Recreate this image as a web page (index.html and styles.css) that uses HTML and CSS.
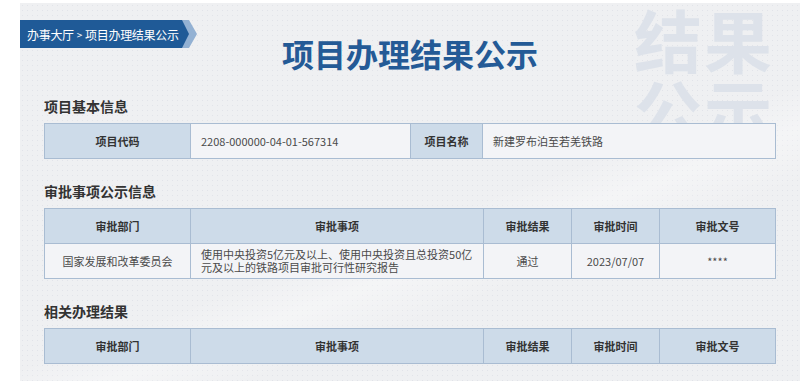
FILE: index.html
```html
<!DOCTYPE html>
<html lang="zh-CN">
<head>
<meta charset="utf-8">
<title>项目办理结果公示</title>
<link rel="stylesheet" href="styles.css">
</head>
<body>
<div class="page">
  <div class="watermark" aria-hidden="true">结果<br>公示</div>
  <header class="header">
    <div class="crumb-wrap">
      <div class="crumb">办事大厅<span class="sep">&gt;</span>项目办理结果公示</div>
    </div>
    <h1 class="title">项目办理结果公示</h1>
    <div></div>
  </header>

  <main class="content">
    <h2 class="sec-title">项目基本信息</h2>
    <table class="tbl tbl-basic">
      <colgroup><col class="c1"><col class="c2"><col class="c3"><col></colgroup>
      <tr>
        <th>项目代码</th>
        <td class="val">2208-000000-04-01-567314</td>
        <th>项目名称</th>
        <td class="val">新建罗布泊至若羌铁路</td>
      </tr>
    </table>

    <h2 class="sec-title">审批事项公示信息</h2>
    <table class="tbl tbl-approve">
      <colgroup><col class="a1"><col class="a2"><col class="a3"><col class="a4"><col></colgroup>
      <tr>
        <th>审批部门</th><th>审批事项</th><th>审批结果</th><th>审批时间</th><th>审批文号</th>
      </tr>
      <tr>
        <td class="center">国家发展和改革委员会</td>
        <td class="left">使用中央投资5亿元及以上、使用中央投资且总投资50亿元及以上的铁路项目审批可行性研究报告</td>
        <td class="center">通过</td>
        <td class="center">2023/07/07</td>
        <td class="center">****</td>
      </tr>
    </table>

    <h2 class="sec-title">相关办理结果</h2>
    <table class="tbl tbl-approve">
      <colgroup><col class="a1"><col class="a2"><col class="a3"><col class="a4"><col></colgroup>
      <tr>
        <th>审批部门</th><th>审批事项</th><th>审批结果</th><th>审批时间</th><th>审批文号</th>
      </tr>
    </table>
  </main>
</div>
</body>
</html>
```

FILE: styles.css
```css
* { box-sizing: border-box; }

html, body {
  margin: 0;
  padding: 0;
  background: #ffffff;
}

body {
  font-family: "Noto Sans CJK SC", "Noto Sans", "Liberation Sans", sans-serif;
  color: #333;
}

.page {
  position: relative;
  margin: 3px 0 0 20px;
  height: 378px;
  overflow: hidden;
  background-color: #eff0f2;
  background-image:
    linear-gradient(160deg, rgba(255,255,255,0) 55%, rgba(255,255,255,0.35) 62%, rgba(255,255,255,0) 70%),
    radial-gradient(rgba(200,205,215,0.35) 0.6px, transparent 0.8px);
  background-size: auto, 5px 5px;
}

.watermark {
  position: absolute;
  left: 614px;
  top: 1px;
  font-size: 68px;
  line-height: 70px;
  font-weight: 700;
  color: #dde2ea;
  letter-spacing: 2px;
  z-index: 0;
}

.header {
  position: relative;
  z-index: 1;
  display: grid;
  grid-template-columns: 1fr auto 1fr;
  align-items: start;
  height: 93px;
  padding-top: 17px;
}

.crumb-wrap {
  position: relative;
  width: 177px;
  height: 28px;
}

.crumb-wrap::before {
  content: "";
  position: absolute;
  left: 160px;
  top: 0;
  width: 17px;
  height: 28px;
  background: #93b1d3;
  clip-path: polygon(0 0, 9px 0, 17px 50%, 9px 100%, 0 100%, 8px 50%);
}

.crumb {
  position: relative;
  height: 28px;
  width: 169px;
  padding-left: 7px;
  display: flex;
  align-items: center;
  background: #1f5a97;
  color: #ffffff;
  font-size: 12px;
  letter-spacing: -0.3px;
  white-space: nowrap;
  clip-path: polygon(0 0, 162px 0, 169px 50%, 162px 100%, 0 100%);
}

.sep {
  font-size: 10px;
  margin: 0 3px;
}

.title {
  margin: 13px 0 0;
  font-size: 32px;
  line-height: 40px;
  font-weight: 700;
  color: #245a96;
  letter-spacing: 0;
}

.content {
  position: relative;
  z-index: 1;
  padding: 0 24px;
}

.sec-title {
  margin: 0 0 7px;
  font-size: 14px;
  line-height: 20px;
  font-weight: 700;
  color: #333;
}

.tbl {
  width: 732px;
  border-collapse: collapse;
  table-layout: fixed;
  margin-bottom: 22px;
  font-size: 11px;
}

.tbl th, .tbl td {
  border: 1px solid #a9bcd2;
  padding: 0 10px;
  height: 35px;
  vertical-align: middle;
}

.tbl th {
  background: #cddbe9;
  font-weight: 700;
  color: #333;
  text-align: center;
}

.tbl td {
  background: #f3f4f7;
  color: #4a4a4a;
}

.tbl .val { text-align: left; }
.tbl .center { text-align: center; }
.tbl .left { text-align: left; line-height: 13px; padding: 3px 10px; }

.tbl-basic .c1 { width: 146px; }
.tbl-basic .c2 { width: 220px; }
.tbl-basic .c3 { width: 72px; }

.tbl-approve .a1 { width: 146px; }
.tbl-approve .a2 { width: 293px; }
.tbl-approve .a3 { width: 88px; }
.tbl-approve .a4 { width: 88px; }
```
